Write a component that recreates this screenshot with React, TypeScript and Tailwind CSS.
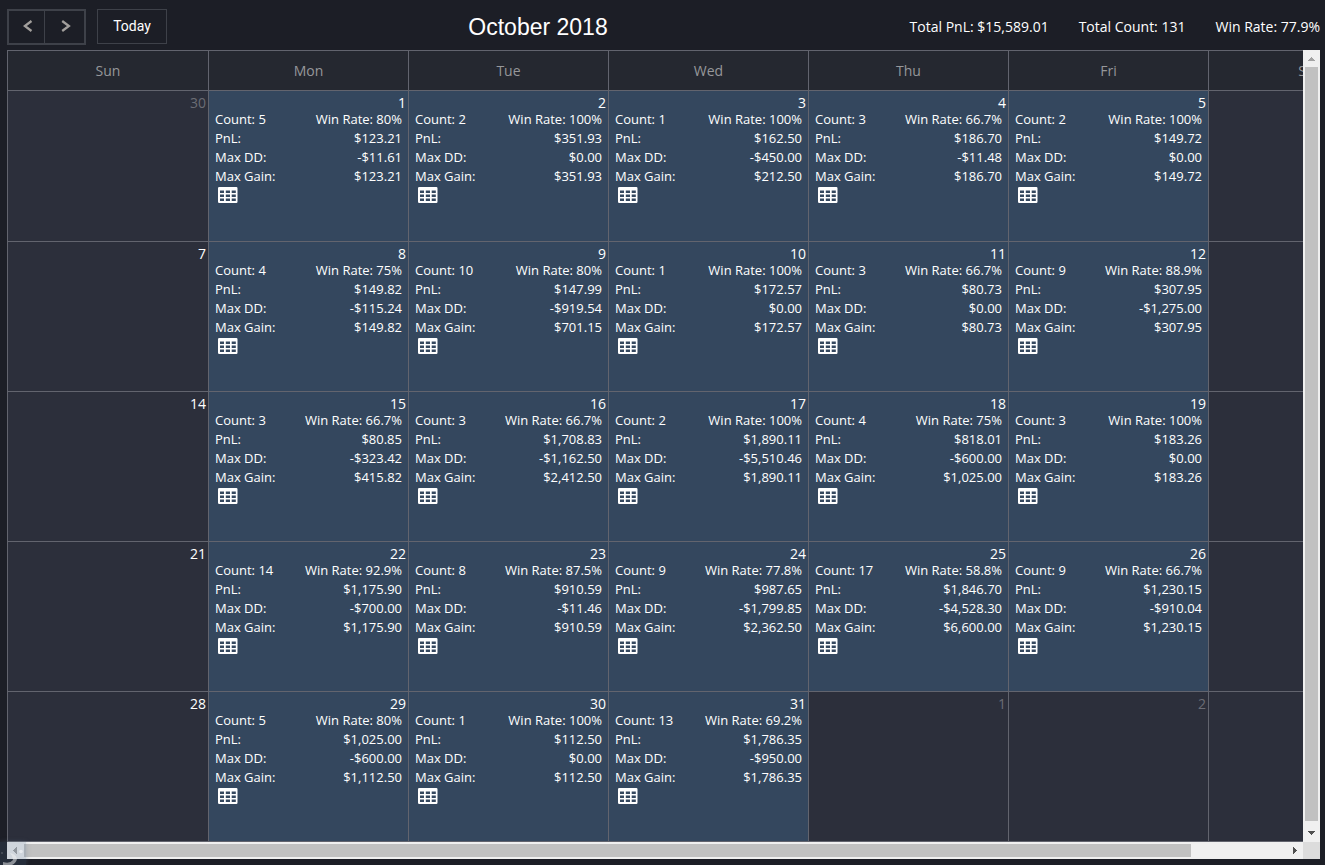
import React from "react";

type Day = { date: string; muted?: boolean; stats?: string[] };

const d = (date: string, count?: string, rate?: string, pnl?: string, dd?: string, gain?: string): Day =>
  count ? { date, stats: [count, rate!, pnl!, dd!, gain!] } : { date };

const weeks: Day[][] = [
  [
    { date: "30", muted: true },
    d("1", "5", "80%", "$123.21", "-$11.61", "$123.21"),
    d("2", "2", "100%", "$351.93", "$0.00", "$351.93"),
    d("3", "1", "100%", "$162.50", "-$450.00", "$212.50"),
    d("4", "3", "66.7%", "$186.70", "-$11.48", "$186.70"),
    d("5", "2", "100%", "$149.72", "$0.00", "$149.72"),
  ],
  [
    d("7"),
    d("8", "4", "75%", "$149.82", "-$115.24", "$149.82"),
    d("9", "10", "80%", "$147.99", "-$919.54", "$701.15"),
    d("10", "1", "100%", "$172.57", "$0.00", "$172.57"),
    d("11", "3", "66.7%", "$80.73", "$0.00", "$80.73"),
    d("12", "9", "88.9%", "$307.95", "-$1,275.00", "$307.95"),
  ],
  [
    d("14"),
    d("15", "3", "66.7%", "$80.85", "-$323.42", "$415.82"),
    d("16", "3", "66.7%", "$1,708.83", "-$1,162.50", "$2,412.50"),
    d("17", "2", "100%", "$1,890.11", "-$5,510.46", "$1,890.11"),
    d("18", "4", "75%", "$818.01", "-$600.00", "$1,025.00"),
    d("19", "3", "100%", "$183.26", "$0.00", "$183.26"),
  ],
  [
    d("21"),
    d("22", "14", "92.9%", "$1,175.90", "-$700.00", "$1,175.90"),
    d("23", "8", "87.5%", "$910.59", "-$11.46", "$910.59"),
    d("24", "9", "77.8%", "$987.65", "-$1,799.85", "$2,362.50"),
    d("25", "17", "58.8%", "$1,846.70", "-$4,528.30", "$6,600.00"),
    d("26", "9", "66.7%", "$1,230.15", "-$910.04", "$1,230.15"),
  ],
  [
    d("28"),
    d("29", "5", "80%", "$1,025.00", "-$600.00", "$1,112.50"),
    d("30", "1", "100%", "$112.50", "$0.00", "$112.50"),
    d("31", "13", "69.2%", "$1,786.35", "-$950.00", "$1,786.35"),
    { date: "1", muted: true },
    { date: "2", muted: true },
  ],
];

const cols = "grid grid-cols-[201px_repeat(5,200px)_200px]";

function TableIcon() {
  return (
    <svg width="20" height="17" viewBox="0 0 20 17" className="ml-[3px] mt-px block">
      <path
        fill="#fff"
        fillRule="evenodd"
        d="M1.2 0H18.3Q19.5 0 19.5 1.2V14.8Q19.5 16 18.3 16H1.2Q0 16 0 14.8V1.2Q0 0 1.2 0ZM2 3.5V6H6V3.5ZM7.8 3.5V6H12V3.5ZM13.7 3.5V6H17.8V3.5ZM2 7.5V10H6V7.5ZM7.8 7.5V10H12V7.5ZM13.7 7.5V10H17.8V7.5ZM2 11.5V14H6V11.5ZM7.8 11.5V14H12V11.5ZM13.7 11.5V14H17.8V11.5Z"
      />
    </svg>
  );
}

function StatRow({ label, value }: { label: string; value: string }) {
  return (
    <div className="flex h-[19px] justify-between">
      <span>{label}</span>
      <span>{value}</span>
    </div>
  );
}

function DayCell({ day }: { day: Day }) {
  return (
    <div className={`border-r border-b border-[#62646e] ${day.stats ? "bg-[#34475e]" : "bg-[#2c2f3b]"}`}>
      <div className={`h-[19px] pt-[2px] pr-[2px] text-right text-[14px] leading-[19px] ${day.muted ? "text-[#6b6d75]" : "text-white"}`}>
        {day.date}
      </div>
      {day.stats && (
        <div className="pl-[6px] pr-[6px] text-[13px] leading-[19px] text-white">
          <StatRow label={`Count: ${day.stats[0]}`} value={`Win Rate: ${day.stats[1]}`} />
          <StatRow label="PnL:" value={day.stats[2]} />
          <StatRow label="Max DD:" value={day.stats[3]} />
          <StatRow label="Max Gain:" value={day.stats[4]} />
          <TableIcon />
        </div>
      )}
    </div>
  );
}

function Arrow({ d, fill }: { d: string; fill: string }) {
  return (
    <svg width="17" height="17" viewBox="0 0 17 17" shapeRendering="crispEdges" className="block shrink-0">
      <path d={d} fill={fill} />
    </svg>
  );
}

export default function App() {
  return (
    <div className="relative flex h-[865px] w-[1325px] flex-col overflow-hidden bg-[#1c1e26] font-['Open_Sans',sans-serif] text-white">
      <header className="grid h-[50px] shrink-0 grid-cols-[454px_154px_1fr] pl-[7px]">
        <div className="flex items-start pt-[9px]">
          <div className="flex h-[36px] w-[79px] border-2 border-[#3e4149]">
            <button className="flex w-[36px] items-center justify-center border-r border-[#3e4149] pb-[2px] pl-[3px]">
              <svg width="10" height="12" viewBox="0 0 10 12" fill="none" stroke="#a29f9c" strokeWidth="2.3">
                <path d="M8.5 1L1.8 6L8.5 11" />
              </svg>
            </button>
            <button className="flex flex-1 items-center justify-center pb-[2px] pl-[2px]">
              <svg width="10" height="12" viewBox="0 0 10 12" fill="none" stroke="#a29f9c" strokeWidth="2.3">
                <path d="M1.2 1L7.9 6L1.2 11" />
              </svg>
            </button>
          </div>
          <button className="ml-[11px] h-[35px] w-[70px] border border-[#3e4149] font-['Roboto',sans-serif] text-[14px]">Today</button>
        </div>
        <h1 className="pt-[9px] text-center font-['Liberation_Sans',sans-serif] text-[23px] leading-[36px] whitespace-nowrap">October 2018</h1>
        <div className="flex justify-end gap-[30px] pr-[5px] pt-[17px] text-[14px] leading-[20px] whitespace-nowrap">
          <span>Total PnL: $15,589.01</span>
          <span>Total Count: 131</span>
          <span>Win Rate: 77.9%</span>
        </div>
      </header>

      <div className="ml-[7px] grid h-[809px] w-[1313px] grid-cols-[1296px_17px] grid-rows-[792px_17px]">
        <div className="overflow-hidden">
          <div className="w-[1401px] border-t border-l border-[#62646e]">
            <div className={`${cols} h-[40px] bg-[#252830] text-center text-[14px] leading-[39px] text-[#96979a]`}>
              {["Sun", "Mon", "Tue", "Wed", "Thu", "Fri", "Sat"].map((n) => (
                <div key={n} className="border-r border-b border-[#62646e]">{n}</div>
              ))}
            </div>
            {weeks.map((w, i) => (
              <div key={i} className={`${cols} ${i === 0 ? "h-[151px]" : "h-[150px]"}`}>
                {w.map((day, j) => (
                  <DayCell key={j} day={day} />
                ))}
                <div className="border-r border-b border-[#62646e] bg-[#2c2f3b]" />
              </div>
            ))}
          </div>
        </div>
        <div className="flex flex-col items-center bg-[#f0f0f0]">
          <Arrow d="M8 7h1v1h1v1h1v1h1v1H5v-1h1v-1h1v-1h1z" fill="#a3a3a3" />
          <div className="w-[13px] flex-1 bg-[#c1c1c1]" />
          <div className="h-[4px]" />
          <Arrow d="M5 6h7v1h-1v1h-1v1H9v1H8V9H7V8H6V7H5z" fill="#505050" />
        </div>
        <div className="flex items-center bg-[#f0f0f0]">
          <Arrow d="M10 5v7H9v-1H8v-1H7V9H6V8h1V7h1V6h1V5z" fill="#a3a3a3" />
          <div className="h-[13px] w-[1167px] bg-[#c1c1c1]" />
          <div className="flex-1" />
          <Arrow d="M7 5v7h1v-1h1v-1h1V9h1V8h-1V7H9V6H8V5z" fill="#505050" />
        </div>
        <div className="bg-[#dcdcdc]" />
      </div>

      <div className="absolute left-0 top-[842px] h-[23px] w-[26px] bg-[#4b6a8c]/20 shadow-[0_0_5px_rgba(100,120,145,0.3)]">
        <svg width="26" height="23" viewBox="0 0 26 23">
          <path d="M10 11Q16 12 17 17Q16 21 12 23H3V20Q10 22 13 18Q13 14 10 11Z" fill="#f4f4f4" opacity=".5" />
          <circle cx="21" cy="9.5" r="1.8" fill="#fff" opacity=".5" />
          <circle cx="2" cy="11" r="1" fill="#fff" opacity=".18" />
        </svg>
      </div>
    </div>
  );
}
